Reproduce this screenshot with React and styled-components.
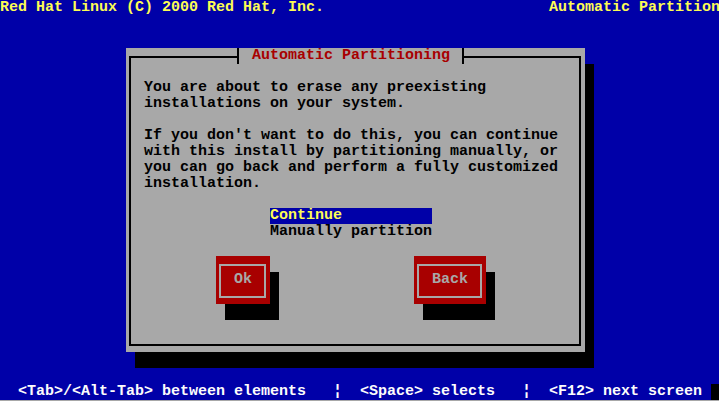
import React from 'react'
import styled, { createGlobalStyle } from 'styled-components'

const BLUE = '#0000a8'
const GRAY = '#a8a8a8'
const RED = '#a80000'
const YELLOW = '#fcfc54'
const WHITE = '#fcfcfc'

// one text cell of the console
const CW = 9
const CH = 16

const GlobalStyle = createGlobalStyle`
  html, body {
    margin: 0;
    padding: 0;
    background: ${GRAY};
    overflow: hidden;
  }
`

const Screen = styled.div`
  display: grid;
  grid-template-columns: repeat(80, ${CW}px);
  grid-template-rows: repeat(25, ${CH}px);
  width: ${80 * CW}px;
  height: ${25 * CH}px;
  background: ${BLUE};
  font-family: 'Liberation Mono', 'DejaVu Sans Mono', monospace;
  font-size: 15px;
  font-weight: bold;
  line-height: ${CH}px;
  white-space: pre;
`

const RootLine = styled.div`
  grid-column: 1 / -1;
  grid-row: ${(p) => p.$row};
  display: flex;
  justify-content: space-between;
  color: ${(p) => p.$color};
`

const Cursor = styled.span`
  display: inline-block;
  width: ${CW}px;
  height: ${CH}px;
  background: #000;
  vertical-align: top;
`

const Window = styled.div`
  grid-column: 15 / span 51;
  grid-row: 4 / span 19;
  position: relative;
  display: flex;
  box-sizing: border-box;
  padding: 8px 4px 6px 3px;
  background: ${GRAY};
  box-shadow: ${CW}px ${CH}px 0 #000;
`

const Frame = styled.div`
  flex: 1;
  display: flex;
  flex-direction: column;
  border: 2px solid #000;
  padding: 22px 0 0 13px;
  color: #000;
`

const Title = styled.div`
  position: absolute;
  top: 0;
  left: 111px;
  height: ${CH}px;
  box-sizing: border-box;
  padding: 0 12px 0 13px;
  border-left: 2px solid #000;
  border-right: 2px solid #000;
  background: ${GRAY};
  color: ${RED};
`

const Paragraph = styled.div`
  margin-bottom: ${CH}px;
`

const ListBox = styled.div`
  width: ${18 * CW}px;
  margin: 0 0 ${CH}px 126px;
`

const Item = styled.div`
  height: ${CH}px;
  background: ${(p) => (p.$selected ? BLUE : 'transparent')};
  color: ${(p) => (p.$selected ? YELLOW : '#000')};
`

const ButtonRow = styled.div`
  display: flex;
  gap: 144px;
  padding-left: 72px;
`

const Button = styled.button`
  display: flex;
  box-sizing: border-box;
  width: ${(p) => p.$cols * CW}px;
  height: ${3 * CH}px;
  margin: 0;
  padding: 8px 4px 6px 3px;
  border: none;
  background: ${RED};
  box-shadow: ${CW}px ${CH}px 0 #000;
  font: inherit;
  line-height: ${CH}px;
  cursor: pointer;
`

const ButtonFrame = styled.span`
  flex: 1;
  border: 2px solid ${GRAY};
  padding: 6px 0 0 13px;
  color: ${GRAY};
  text-align: left;
`

export default function App() {
  return (
    <>
      <GlobalStyle />
      <Screen>
        <RootLine $row={1} $color={YELLOW}>
          <span>Red Hat Linux (C) 2000 Red Hat, Inc.</span>
          <span>Automatic Partition</span>
        </RootLine>

        <Window>
          <Title>Automatic Partitioning</Title>
          <Frame>
            <Paragraph>
              {'You are about to erase any preexisting\ninstallations on your system.'}
            </Paragraph>
            <Paragraph>
              {"If you don't want to do this, you can continue\nwith this install by partitioning manually, or\nyou can go back and perform a fully customized\ninstallation."}
            </Paragraph>
            <ListBox>
              <Item $selected>Continue</Item>
              <Item>Manually partition</Item>
            </ListBox>
            <ButtonRow>
              <Button $cols={6}>
                <ButtonFrame>Ok</ButtonFrame>
              </Button>
              <Button $cols={8}>
                <ButtonFrame>Back</ButtonFrame>
              </Button>
            </ButtonRow>
          </Frame>
        </Window>

        <RootLine $row={25} $color={WHITE}>
          <span>
            {'  <Tab>/<Alt-Tab> between elements   \u00a6  <Space> selects   \u00a6  <F12> next screen '}
            <Cursor />
          </span>
        </RootLine>
      </Screen>
    </>
  )
}
